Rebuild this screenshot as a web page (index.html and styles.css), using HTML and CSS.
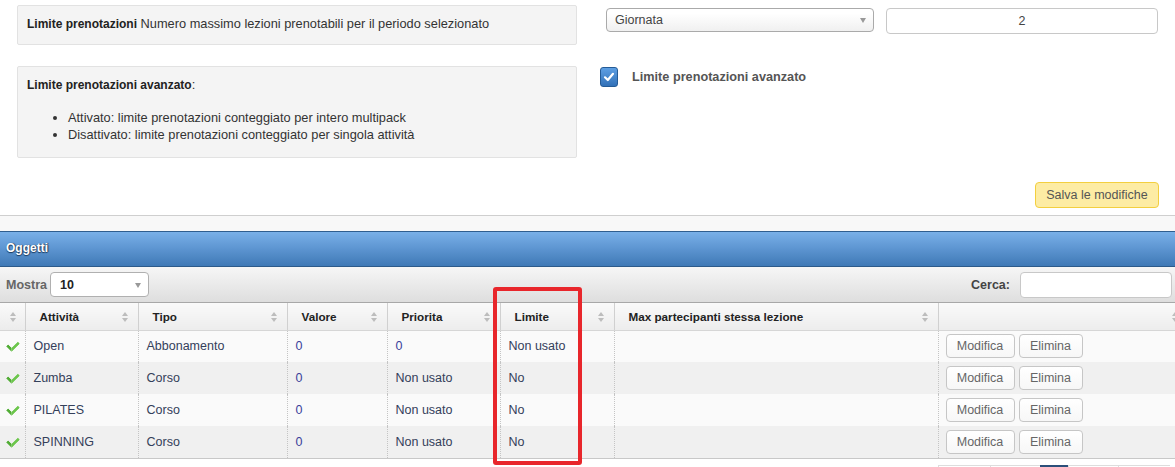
FILE: index.html
```html
<!DOCTYPE html>
<html lang="it">
<head>
<meta charset="utf-8">
<title>Limite prenotazioni</title>
<link rel="stylesheet" href="styles.css">
</head>
<body>
<div class="page">
  <section class="settings">
    <div class="set-row row1">
      <div class="info info-small"><b>Limite prenotazioni</b> Numero massimo lezioni prenotabili per il periodo selezionato</div>
      <div class="controls">
        <div class="select sel-period"><span>Giornata</span><i class="arrow"></i></div>
        <div class="textin">2</div>
      </div>
    </div>
    <div class="set-row row2">
      <div class="info info-big">
        <p><b>Limite prenotazioni avanzato</b>:</p>
        <ul>
          <li>Attivato: limite prenotazioni conteggiato per intero multipack</li>
          <li>Disattivato: limite prenotazioni conteggiato per singola attività</li>
        </ul>
      </div>
      <div class="checkrow">
        <span class="cbox"><svg viewBox="0 0 12 12" width="12" height="12"><path d="M2 6.3 L4.8 9 L10 2.8" fill="none" stroke="#fff" stroke-width="2.2" stroke-linecap="round" stroke-linejoin="round"/></svg></span>
        <span class="cblabel">Limite prenotazioni avanzato</span>
      </div>
    </div>
    <div class="save-row"><button class="save">Salva le modifiche</button></div>
  </section>
  <div class="gap-band"></div>
  <section class="panel">
    <div class="panel-head">Oggetti</div>
    <div class="toolbar">
      <div class="length"><span class="lbl">Mostra</span><div class="select sel-len"><span>10</span><i class="arrow"></i></div></div>
      <div class="search"><span class="lbl">Cerca:</span><div class="searchbox"></div></div>
    </div>
    <div class="table-wrap">
      <table class="grid">
        <colgroup>
          <col style="width:25px"><col style="width:113px"><col style="width:149px"><col style="width:100px"><col style="width:113px"><col style="width:114px"><col style="width:324px"><col style="width:250px">
        </colgroup>
        <thead>
          <tr>
            <th class="c0"><i class="sort"></i></th>
            <th>Attività<i class="sort"></i></th>
            <th>Tipo<i class="sort"></i></th>
            <th>Valore<i class="sort"></i></th>
            <th>Priorita<i class="sort"></i></th>
            <th>Limite<i class="sort"></i></th>
            <th>Max partecipanti stessa lezione<i class="sort"></i></th>
            <th><i class="sort"></i></th>
          </tr>
        </thead>
        <tbody>
          <tr>
            <td class="c0"><i class="ok"></i></td><td>Open</td><td>Abbonamento</td><td class="num">0</td><td class="num">0</td><td>Non usato</td><td></td>
            <td class="act"><button class="btn">Modifica</button><button class="btn">Elimina</button></td>
          </tr>
          <tr>
            <td class="c0"><i class="ok"></i></td><td>Zumba</td><td>Corso</td><td class="num">0</td><td>Non usato</td><td>No</td><td></td>
            <td class="act"><button class="btn">Modifica</button><button class="btn">Elimina</button></td>
          </tr>
          <tr>
            <td class="c0"><i class="ok"></i></td><td>PILATES</td><td>Corso</td><td class="num">0</td><td>Non usato</td><td>No</td><td></td>
            <td class="act"><button class="btn">Modifica</button><button class="btn">Elimina</button></td>
          </tr>
          <tr>
            <td class="c0"><i class="ok"></i></td><td>SPINNING</td><td>Corso</td><td class="num">0</td><td>Non usato</td><td>No</td><td></td>
            <td class="act"><button class="btn">Modifica</button><button class="btn">Elimina</button></td>
          </tr>
        </tbody>
      </table>
    </div>
    <div class="pager">
      <span class="pg pg-wide"></span><span class="pg"></span><span class="pg pg-cur"></span><span class="pg"></span><span class="pg pg-wide"></span>
    </div>
  </section>
  <div class="highlight"></div>
</div>
</body>
</html>
```

FILE: styles.css
```css
html, body {
  margin: 0;
  padding: 0;
  background: #fff;
}
body {
  font-family: "Liberation Sans", Arial, sans-serif;
  font-size: 12.5px;
  color: #333;
  overflow: hidden;
}
.page {
  position: relative;
  width: 1175px;
  height: 467px;
  overflow: hidden;
}

/* ---------- settings ---------- */
.settings {
  padding: 5px 16px 0 17px;
  border-bottom: 1px solid #cfcfcf;
  box-sizing: border-box;
  height: 216px;
}
.set-row {
  display: flex;
  align-items: flex-start;
}
.info {
  width: 560px;
  box-sizing: border-box;
  background: #f4f4f4;
  border: 1px solid #e2e2e2;
  border-radius: 2px;
  color: #333;
  font-size: 12.8px;
}
.info b { color: #222; font-size: 12px; }
.info-small {
  height: 40px;
  padding: 10px 9px;
  line-height: 16px;
}
.controls {
  display: flex;
  gap: 12px;
  margin-left: 29px;
  margin-top: 3px;
}
.select {
  position: relative;
  box-sizing: border-box;
  border: 1px solid #aaa;
  border-radius: 4px;
  background: linear-gradient(#ffffff 20%, #f0f0f0 100%);
  display: flex;
  align-items: center;
  color: #444;
}
.arrow {
  position: absolute;
  right: 7px;
  top: 50%;
  margin-top: -2px;
  width: 0;
  height: 0;
  border-left: 3.5px solid transparent;
  border-right: 3.5px solid transparent;
  border-top: 5px solid #999;
}
.sel-period {
  width: 268px;
  height: 24px;
  padding-left: 8px;
}
.textin {
  width: 272px;
  height: 26px;
  box-sizing: border-box;
  border: 1px solid #c8c8c8;
  border-radius: 4px;
  background: #fff;
  text-align: center;
  line-height: 24px;
  color: #444;
}
.row2 { margin-top: 21px; }
.info-big {
  height: 92px;
  padding: 8px 9px;
}
.info-big p {
  margin: 0;
  line-height: 20px;
}
.info-big ul {
  margin: 14px 0 0 0;
  padding-left: 41px;
  line-height: 17px;
}
.checkrow {
  display: flex;
  align-items: center;
  margin-left: 23px;
  margin-top: 1px;
  gap: 14px;
}
.cbox {
  width: 18px;
  height: 20px;
  box-sizing: border-box;
  border: 1px solid #245b96;
  border-radius: 3px;
  background: linear-gradient(#5d9fe3, #3271b8);
  display: flex;
  align-items: center;
  justify-content: center;
}
.cblabel {
  font-weight: bold;
  color: #555;
  font-size: 12.7px;
  margin-top: -1px;
}
.save-row {
  display: flex;
  justify-content: flex-end;
  margin-top: 24px;
}
.save {
  font-family: inherit;
  font-size: 12.5px;
  color: #555;
  background: #fdeca4;
  border: 1px solid #f3cf3f;
  border-radius: 4px;
  height: 26px;
  padding: 0 6px;
  width: 124px;
}

.gap-band {
  height: 15px;
  background: #f8f8f8;
}

/* ---------- panel ---------- */
.panel-head {
  height: 36px;
  box-sizing: border-box;
  border-top: 1px solid #2f5e8f;
  border-bottom: 1px solid #2c5a8a;
  background: linear-gradient(#79b0e8 0%, #5f97d3 45%, #3f79b6 100%);
  color: #fff;
  font-weight: bold;
  font-size: 12px;
  line-height: 33px;
  padding-left: 6px;
  text-shadow: 0 1px 1px #1c3c60, 1px 0 1px #1c3c60;
}
.toolbar {
  height: 36px;
  box-sizing: border-box;
  background: linear-gradient(#f6f6f6, #dedede);
  border-bottom: 1px solid #a8a8a8;
  display: flex;
  justify-content: space-between;
  align-items: center;
  padding: 0 3px 0 6px;
}
.length, .search {
  display: flex;
  align-items: center;
}
.lbl {
  font-weight: bold;
  color: #555;
  font-size: 12.5px;
}
.length .lbl { color: #666; }
.sel-len {
  width: 99px;
  height: 25px;
  margin-left: 3px;
  padding-left: 9px;
  border-color: #b0b0b0;
  color: #222;
  font-weight: bold;
  background: #fff;
}
.search .lbl { margin-right: 10px; color: #444; }
.searchbox {
  width: 152px;
  height: 26px;
  box-sizing: border-box;
  border: 1px solid #c8c8c8;
  border-radius: 4px;
  background: #fff;
}

/* ---------- table ---------- */
.table-wrap {
  width: 1175px;
  overflow: hidden;
}
.grid {
  table-layout: fixed;
  border-collapse: collapse;
  width: 1188px;
}
.grid th {
  position: relative;
  height: 27px;
  box-sizing: border-box;
  text-align: left;
  padding: 0 14px;
  font-weight: bold;
  font-size: 11.7px;
  color: #222;
  background: linear-gradient(#fafafa, #ececec);
  border-left: 1px solid #d0d0d0;
  border-bottom: 1px solid #d6d6d6;
}
.grid th:first-child { border-left: none; }
.sort {
  position: absolute;
  right: 9px;
  top: 9px;
  width: 7px;
  height: 10px;
}
.sort::before, .sort::after {
  content: "";
  position: absolute;
  left: 0;
  border-left: 3.5px solid transparent;
  border-right: 3.5px solid transparent;
}
.sort::before { top: 0; border-bottom: 4px solid #bdbdbd; }
.sort::after { bottom: 0; border-top: 4px solid #bdbdbd; }
.grid th.c0 .sort { right: 8px; }
.grid td {
  height: 32px;
  box-sizing: border-box;
  padding: 0 8px;
  color: #34405a;
  border-left: 1px dotted #c4c4c4;
  white-space: nowrap;
}
.grid td:first-child { border-left: none; }
.grid td.num { color: #3b3f9a; }
.grid tbody tr:nth-child(odd) td { background: #fafafa; }
.grid tbody tr:nth-child(even) td { background: #f0f0f0; }
.grid tbody tr:last-child td { border-bottom: 1px solid #c8c8c8; }
.c0 { text-align: center; }
.ok {
  display: inline-block;
  width: 14px;
  height: 11px;
  position: relative;
  top: 1px;
  left: -3px;
}
.ok::before {
  content: "";
  position: absolute;
  left: 4px;
  top: -1px;
  width: 5px;
  height: 9px;
  border-right: 3px solid #6cc64c;
  border-bottom: 3px solid #52ad36;
  transform: rotate(45deg);
  border-radius: 1px;
}
.grid td.act {
  padding: 0 7px;
}
.btn {
  font-family: inherit;
  font-size: 12.5px;
  color: #666;
  background: linear-gradient(#ffffff, #f7f7f7);
  border: 1px solid #c6c6c6;
  border-radius: 4px;
  height: 24px;
  padding: 0 6px;
  margin-right: 4px;
  vertical-align: middle;
}
.btn:first-child { width: 69px; }
.btn:last-child { width: 64px; }

.pager {
  display: flex;
  margin: 6px 0 0 938px;
}
.pg {
  width: 50px;
  height: 20px;
  border-left: 1px solid #ddd;
  border-top: 1px solid #ddd;
  box-sizing: border-box;
}
.pg-wide { width: 52px; }
.pg-cur { width: 28px; background: #2b4f7a; border-color: #2b4f7a; }

.highlight {
  position: absolute;
  left: 493px;
  top: 287px;
  width: 89px;
  height: 178px;
  box-sizing: border-box;
  border: 4px solid #e8262b;
  border-radius: 3px;
}
```
